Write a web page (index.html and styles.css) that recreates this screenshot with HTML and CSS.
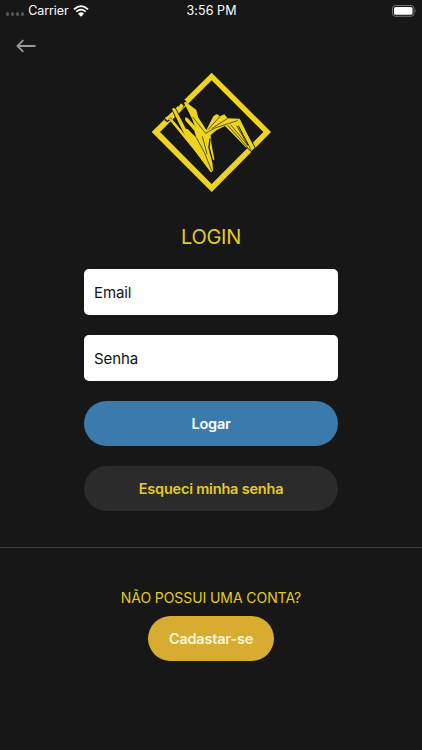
FILE: index.html
```html
<!DOCTYPE html>
<html lang="pt-BR">
<head>
<meta charset="utf-8">
<title>Login</title>
<link rel="stylesheet" href="styles.css">
</head>
<body>
<header class="status">
  <div class="status-left">
    <span class="dots"><i></i><i></i><i></i><i></i></span>
    <span class="carrier">Carrier</span>
    <svg class="wifi" viewBox="0 0 48 36"><path d="M3 13Q24-6 45 13M10 20Q24 8 38 20" fill="none" stroke="#fff" stroke-width="5.5"/><path d="M15 26Q24 18 33 26L24 35Z" fill="#fff"/></svg>
  </div>
  <span class="time">3:56 PM</span>
  <svg class="battery" viewBox="0 0 25 12"><rect x=".5" y=".5" width="21.5" height="10.8" rx="3" fill="none" stroke="#777"/><rect x="2" y="2" width="18.5" height="7.8" rx="1.6" fill="#fff"/><path d="M23.3 4q1.4 1.9 0 3.8z" fill="#777"/></svg>
</header>
<nav class="nav">
  <svg class="back" viewBox="0 0 20 14"><path d="M19.5 7H1.5M7.3 1.2L1.5 7l5.8 5.8" fill="none" stroke="#999" stroke-width="1.9"/></svg>
</nav>
<main class="page">
  <svg class="logo" viewBox="0 0 396 396" fill="#ecd41f">
    <path fill-rule="evenodd" d="M200 20L378 198L200 378L20 198ZM200 43L45 198L200 354L355 198Z"/>
    <g transform="translate(60 96)">
      <path d="M-2 66L11 53L21 62L7 73ZM36 22L55 5L66 14L50 34Z" fill="#171717"/>
      <path d="M0 59L14 51L18 58L7 68ZM32 38L48 16L56 23L42 46Z"/>
      <path d="M54 8L60 5L69 20L58 18Z" fill="#171717"/>
      <g stroke="#171717" stroke-width="5" stroke-linejoin="round" paint-order="stroke">
        <path d="M21 33L26 29L32 34L67 101L82 112L92 128L138 218L78 142L64 121Z"/>
        <path d="M245 146L252 141L222 65L269 149L259 159Z"/>
      </g>
      <path d="M11 63L18 61L32 76L78 133L95 148L142 216L137 223L89 158Z"/>
      <path d="M57 14L62 11L94 36L99 57L124 96L145 55L155 48L165 55L178 49L188 61L224 62L267 150L260 157L218 86L213 82L249 143L244 149L180 84L154 97L137 111L139 136L148 184L142 190L144 217L139 223L78 142L71 111L58 98L60 92L68 93L94 119L88 98L60 66L61 58L69 61L90 84L79 58Z"/>
      <g fill="none" stroke="#171717" stroke-width="2">
        <path d="M83 57L122 106L150 90L220 67M129 95L165 55M140 92L188 61M188 82L247 148M197 80L249 143M94 119L118 163L140 218M112 115L126 168"/>
        <path d="M135 122L132 148L144 193" stroke-width="4"/>
        <path d="M220 83L260 157" stroke-width="3"/>
      </g>
      <path d="M216 69L223 63L267 150L260 157Z"/>
    </g>
  </svg>
  <h1 class="title"><span>LOGIN</span></h1>
  <form class="form">
    <div class="field"><span class="email">Email</span></div>
    <div class="field"><span class="senha">Senha</span></div>
    <button type="button" class="btn primary">Logar</button>
    <button type="button" class="btn secondary">Esqueci minha senha</button>
  </form>
</main>
<footer class="signup">
  <p class="question">NÃO POSSUI UMA CONTA?</p>
  <button type="button" class="btn register">Cadastar-se</button>
</footer>
</body>
</html>
```
FILE: styles.css
```css
* { box-sizing: border-box; }
body {
  margin: 0;
  width: 422px;
  height: 750px;
  overflow: hidden;
  background: #171717;
  color: #e3cb22;
  font-family: Inter, "Liberation Sans", sans-serif;
}
svg { display: block; }
.status {
  display: grid;
  grid-template-columns: 1fr auto 1fr;
  align-items: center;
  height: 21px;
  padding: 0 5px 0 6px;
  color: #fff;
  font-size: 12.5px;
  line-height: 20px;
}
.status-left { display: flex; align-items: center; }
.carrier { letter-spacing: -.1px; }
.dots { display: flex; gap: 1.7px; margin: 7px 4px 0 0; }
.dots i { width: 3.3px; height: 3.3px; border-radius: 50%; background: #555; }
.wifi { width: 16px; height: 12px; margin-left: 4.5px; }
.time { letter-spacing: .1px; }
.battery { width: 25px; height: 12px; justify-self: end; }
.nav { height: 45px; padding: 18px 0 0 16px; }
.back { width: 20px; height: 14px; }
.page { display: flex; flex-direction: column; align-items: center; }
.logo { width: 132px; height: 132px; }
.title {
  margin: 26px 0 19px;
  font-size: 20px;
  line-height: 26px;
  font-weight: 400;
  letter-spacing: -.3px;
}
.form { display: flex; flex-direction: column; gap: 20.5px; width: 254px; }
.field {
  display: flex;
  align-items: center;
  height: 45.5px;
  padding: 1px 0 0 10px;
  border-radius: 5px;
  background: #fff;
  color: #111;
  font-size: 15px;
  letter-spacing: -.1px;
}
.btn {
  height: 44.5px;
  padding: 1px 0 0;
  border: 0;
  border-radius: 23px;
  font: 600 14.5px/44px Inter, "Liberation Sans", sans-serif;
  letter-spacing: -.2px;
}
.primary { background: #3a7aad; color: #fff; }
.secondary { background: #2b2b2b; color: #e3cb22; }
.signup {
  display: flex;
  flex-direction: column;
  align-items: center;
  margin-top: 36px;
  padding-top: 40px;
  border-top: 1px solid #414141;
}
.question { margin: 0 0 8.5px; font-size: 14px; line-height: 20px; letter-spacing: -.08px; }
.register { width: 126px; background: #d8ab31; color: #fff8dc; }
```
